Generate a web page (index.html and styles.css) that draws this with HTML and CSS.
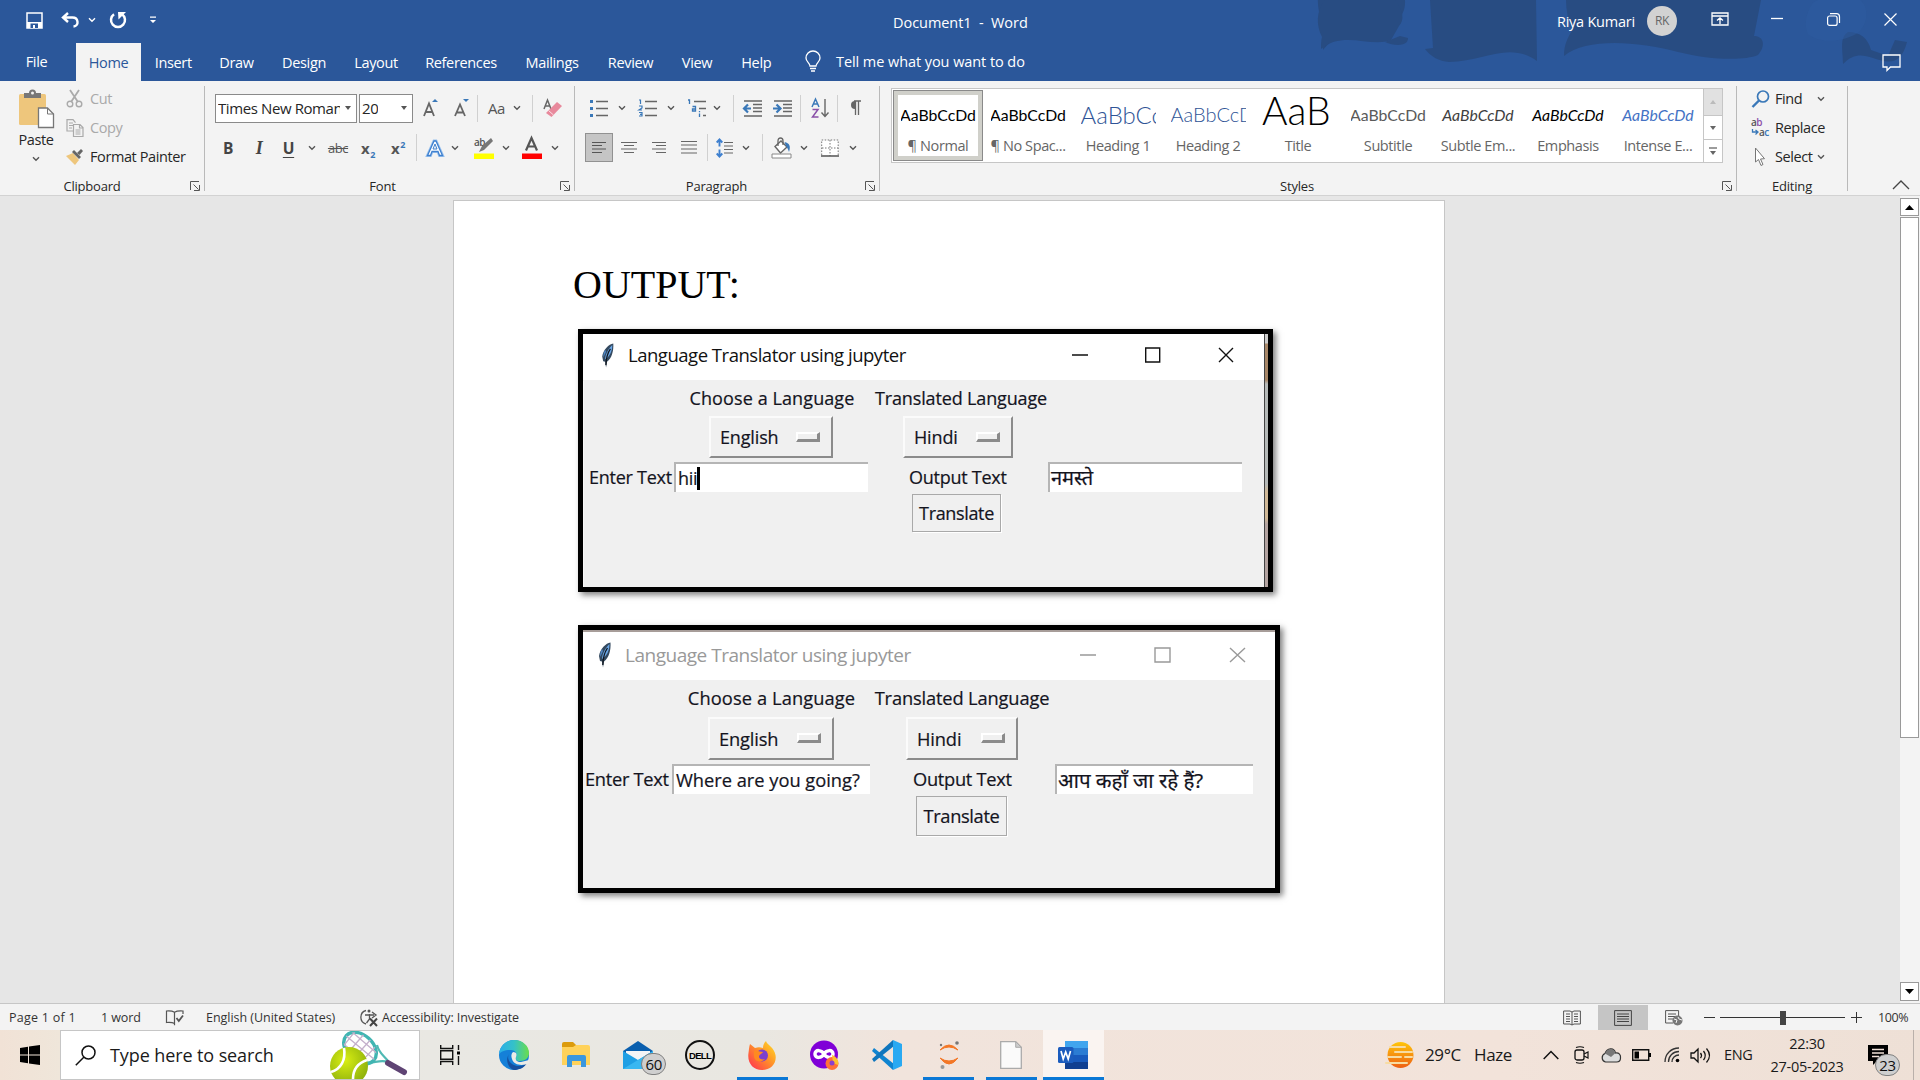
FILE: index.html
```html
<!DOCTYPE html>
<html lang="en">
<head>
<meta charset="utf-8">
<title>Document1 - Word</title>
<link rel="stylesheet" href="styles.css">
</head>
<body>
<svg class="defs" width="0" height="0" aria-hidden="true">
  <symbol id="chev" viewBox="0 0 8 6"><path d="M1 1.200l3 3 3-3" fill="none" stroke="currentColor" stroke-width="1.400"/></symbol>
  <symbol id="launch" viewBox="0 0 10 10"><path d="M.5 9V.5H9M3.500 3.500l5 5M9.500 4v5.500H4" fill="none" stroke="#555"/></symbol>
  <symbol id="feather" viewBox="0 0 14 26"><path d="M12.500.5C8 1 2 7 1 14l1 5 2 .5 1 6 1-6C11 16 13 8 12.500.5z" fill="#34495f"/><path d="M11.500 2C8 5 4 12 4 17c5-3 7.500-9 7.500-15z" fill="#6aa6e6"/><path d="M4 7C2.500 10 2 12 2.200 15L5 9z" fill="#4f86c4"/><path d="M9.500 6C6 11 5 15 4.800 23" fill="none" stroke="#10161d" stroke-width="1.300"/></symbol>
  <symbol id="para" viewBox="0 0 12 16"><path d="M5 1h7M6.500 1v14M9.500 1v14" stroke="#666" stroke-width="1.300" fill="none"/><path d="M6 1a4 4 0 0 0 0 8z" fill="#666"/></symbol>
</svg>

<header class="top">
  <svg class="art" width="620" height="81" viewBox="1300 0 620 81"><g fill="#284c82"><path d="M1325 0h70c12 16 14 34 2 45-14 11-50-2-74 29 0-10-2-18-1-28-6-16-6-32 3-46z" transform="translate(0 -24)"/><path d="M1325 0h70c8 10 10 20 4 26l-8 14c-20 8-48-10-70 9 0-5 0-8 1-12-6-12-6-26 3-37z"/><path d="M1385 42c9 4 23 5 23-4l-8-2z"/><path d="M1430 0h106l1 61c-28-20-52 0-88 1-10-1-18-5-24-13l8-1z"/><path d="M1566 0h195l-7 36c10 0 12 10 4 19-14 6-48 5-80-3-42-11-92-14-114 4 0-12 4-18 8-26-4-10-6-20-6-30z"/><path d="M1848 32c12 0 20 6 23 18l17 6 7-16 12 2c-6 22-16 22-34 16-12-4-20-4-30 6 0-14-4-26 5-32z"/></g><path d="M1808 12c4-10 8-12 12-12h40c10 8 8 26-4 34-14 8-36 10-48 0-3-6-3-14 0-22z" fill="#2d5c9f" opacity=".5"/></svg>
  <div class="titlebar">
    <div class="qat">
      <svg width="17" height="17" viewBox="0 0 17 17"><path d="M1 1h15v15H1z" fill="none" stroke="#fff" stroke-width="1.500"/><path d="M1 10h15v6H1z" fill="#fff"/><path d="M4.500 11.500h7.500V16H4.500z" fill="#2b579a"/><path d="M7 13h2v3H7z" fill="#fff"/></svg>
      <svg width="19" height="16" viewBox="0 0 19 16"><path d="M7 1L2 5.500 7 10M2 5.500h9.500c6 0 7 8.500 1 9" fill="none" stroke="#fff" stroke-width="2.400"/></svg>
      <svg class="c" width="8" height="6"><use href="#chev"/></svg>
      <svg width="18" height="18" viewBox="0 0 18 18"><path d="M5 3.200a7 7 0 1 0 8 0" fill="none" stroke="#fff" stroke-width="2.500"/><path d="M9 1h8L9.500 8.500z" fill="#fff"/></svg>
      <svg width="8" height="8" viewBox="0 0 8 8"><path d="M1 .5h6v1.300H1zM1 4h6L4 7z" fill="#fff"/></svg>
    </div>
    <div class="doctitle">Document1&nbsp; -&nbsp; Word</div>
    <div class="user">Riya Kumari</div>
    <div class="avatar">RK</div>
    <svg class="w1" width="18" height="14" viewBox="0 0 18 14"><path d="M1 1h16v12H1zM1 4h16M9 12V6M6 8.500L9 5.800l3 2.700" fill="none" stroke="#fff" stroke-width="1.300"/></svg>
    <svg class="w2" width="12" height="12" viewBox="0 0 12 12"><path d="M0 5.500h12" stroke="#fff" stroke-width="1.300"/></svg>
    <svg class="w3" width="13" height="13" viewBox="0 0 13 13"><rect x=".6" y="3" width="9.500" height="9.400" rx="2" fill="none" stroke="#fff" stroke-width="1.200"/><path d="M3 .7h6.500q3 0 3 3V10" fill="none" stroke="#fff" stroke-width="1.200"/></svg>
    <svg class="w4" width="13" height="13" viewBox="0 0 13 13"><path d="M.5.5l12 12M12.500.5l-12 12" stroke="#fff" stroke-width="1.200"/></svg>
  </div>
  <nav class="tabs">
    <span class="file">File</span><span class="on">Home</span><span>Insert</span><span>Draw</span><span>Design</span><span>Layout</span><span>References</span><span>Mailings</span><span>Review</span><span>View</span><span>Help</span>
    <svg class="bulb" width="16" height="21" viewBox="0 0 16 21"><path d="M5 15c0-3-4-4-4-8a7 7 0 0 1 14 0c0 4-4 5-4 8zM5 17.500h6M6 20h4" fill="none" stroke="#fff" stroke-width="1.300"/></svg>
    <span class="tell">Tell me what you want to do</span>
    <svg class="comment" width="19" height="18" viewBox="0 0 19 18"><path d="M1 1h17v12H8.500L5 16.500V13H1z" fill="none" stroke="#fff" stroke-width="1.300"/></svg>
  </nav>
</header>

<section class="ribbon">
  <div class="group clip">
    <div class="body">
      <div class="paste">
        <svg width="36" height="40" viewBox="0 0 36 40"><rect x="1" y="5" width="27" height="31" rx="1.500" fill="#eec67c"/><path d="M6 9V4h5a3.500 3.500 0 0 1 7 0h5v5z" fill="#777"/><circle cx="14.500" cy="4" r="1.500" fill="#f3f3f3"/><path d="M20.500 19h9l6 6v13.500h-15z" fill="#fff" stroke="#777" stroke-width="1.300"/><path d="M29.500 19v6h6" fill="none" stroke="#777"/></svg>
        <span>Paste</span>
        <svg class="c" width="8" height="6"><use href="#chev"/></svg>
      </div>
      <div class="cmds">
        <div class="cmd off"><svg width="18" height="18" viewBox="0 0 18 18"><path d="M4 0l8 12M13 0L5 12" stroke="#aaa" stroke-width="1.800"/><circle cx="4" cy="14" r="2.800" fill="none" stroke="#aaa" stroke-width="1.400"/><circle cx="13" cy="14" r="2.800" fill="none" stroke="#aaa" stroke-width="1.400"/></svg>Cut</div>
        <div class="cmd off"><svg width="18" height="18" viewBox="0 0 18 18"><path d="M7 12H1V.6h6l2.500 3M3 4h4M3 6.500h4M3 9h3" fill="none" stroke="#aaa" stroke-width="1.200"/><path d="M7.500 5.500H14l3 3v9H7.500zM13.500 5.500v3.500H17M9.500 11h5M9.500 13h5M9.500 15h5" fill="none" stroke="#aaa" stroke-width="1.200"/></svg>Copy</div>
        <div class="cmd"><svg width="18" height="16" viewBox="0 0 18 16"><path d="M0 7l7-3 6 7-4 5z" fill="#eec67c"/><path d="M6 3l2-2 7 7-2 2z" fill="#666"/><path d="M11 4l4-4 2 2-3.500 4z" fill="#666"/></svg>Format Painter</div>
      </div>
    </div>
    <div class="label"><span>Clipboard</span><svg width="10" height="10"><use href="#launch"/></svg></div>
  </div>

  <div class="group font">
    <div class="row r1">
      <div class="combo name"><span>Times New Roman</span><i></i></div>
      <div class="combo size"><span>20</span><i></i></div>
      <svg width="15" height="18" viewBox="0 0 15 18"><path d="M1 17L6 4.500 11 17M3 13h6" fill="none" stroke="#666" stroke-width="1.800"/><path d="M9 3l3-3 3 3z" fill="#3a78b8"/></svg>
      <svg width="15" height="18" viewBox="0 0 15 18"><path d="M1 17L6 5.500 11 17M3 13.500h6" fill="none" stroke="#666" stroke-width="1.800"/><path d="M9 0l3 3 3-3z" fill="#3a78b8"/></svg>
      <b class="sep"></b>
      <span class="aa">Aa</span>
      <svg class="c" width="8" height="6"><use href="#chev"/></svg>
      <b class="sep"></b>
      <svg width="19" height="20" viewBox="0 0 19 20"><path d="M1 11L4.500 2 8 11M2.500 8h4" fill="none" stroke="#666" stroke-width="1.500"/><path d="M3 15L14 4l5 4L8.500 19z" fill="#e8899c"/><path d="M5.500 12.500l5 4.500" stroke="#fbe0e5"/></svg>
    </div>
    <div class="row r2">
      <span class="fb">B</span><span class="fi">I</span><span class="fu">U</span>
      <svg class="c" width="8" height="6"><use href="#chev"/></svg>
      <span class="fs">abc</span>
      <span class="fx">x<sub>2</sub></span><span class="fx">x<sup>2</sup></span>
      <b class="sep"></b>
      <svg width="18" height="18" viewBox="0 0 18 18"><path d="M1.500 16.500L8 2h2l6.500 14.500h-3l-1.500-4H6l-1.500 4z" fill="#fff" stroke="#9cc3ee" stroke-width="3"/><path d="M1.500 16.500L8 2h2l6.500 14.500h-3l-1.500-4H6l-1.500 4z" fill="#fff" stroke="#3f80cf" stroke-width="1.300"/><path d="M7 10l2-5 2 5z" fill="#f3f3f3" stroke="#3f80cf"/></svg>
      <svg class="c" width="8" height="6"><use href="#chev"/></svg>
      <svg class="end" width="22" height="22" viewBox="0 0 22 22"><text x="1" y="9" class="tiny">ab</text><path d="M6 15l3-6L18 1l2 3-9 9z" fill="#777"/><path d="M1 16.500h20V22H1z" fill="#ff0"/></svg>
      <svg class="c" width="8" height="6"><use href="#chev"/></svg>
      <svg width="22" height="22" viewBox="0 0 22 22"><path d="M5 13.500L10.500 1 16 13.500M7 9.500h7" fill="none" stroke="#555" stroke-width="2.200"/><path d="M1 16.500h20V22H1z" fill="red"/></svg>
      <svg class="c" width="8" height="6"><use href="#chev"/></svg>
    </div>
    <div class="label"><span>Font</span><svg width="10" height="10"><use href="#launch"/></svg></div>
  </div>

  <div class="group parag">
    <div class="row r1">
      <svg width="20" height="18" viewBox="0 0 20 18"><path d="M7 2.500h12M7 9.500h12M7 16.500h12" stroke="#666" stroke-width="1.300"/><path d="M1 1h3v3H1zM1 8h3v3H1zM1 15h3v3H1z" fill="#3a78b8"/></svg>
      <svg class="c" width="8" height="6"><use href="#chev"/></svg>
      <svg width="20" height="18" viewBox="0 0 20 18"><path d="M7 2.500h12M7 9.500h12M7 16.500h12" stroke="#666" stroke-width="1.300"/><path d="M1 1h1.500v4M1 7h3v2L1 11h3M1 13.500h3V17H1M2 15.300h2" fill="none" stroke="#3a78b8" stroke-width="1.200"/></svg>
      <svg class="c" width="8" height="6"><use href="#chev"/></svg>
      <svg width="20" height="18" viewBox="0 0 20 18"><path d="M7 2.500h12M12 9.500h7M16 16.500h3" stroke="#666" stroke-width="1.300"/><path d="M1 1h1.500v4M5.500 7.500h3V12h-3v-2h3M12.500 12v1.300M12.500 14.500V18" fill="none" stroke="#3a78b8" stroke-width="1.300"/></svg>
      <svg class="c" width="8" height="6"><use href="#chev"/></svg>
      <b class="sep"></b>
      <svg width="19" height="17" viewBox="0 0 19 17"><path d="M1 1h18M10 4.500h9M10 8h9M10 11.500h9M1 16h18" stroke="#666" stroke-width="1.300"/><path d="M8 8.500H2M5 4.500l-4 4 4 4" fill="none" stroke="#3a78b8" stroke-width="2.200"/></svg>
      <svg class="end" width="19" height="17" viewBox="0 0 19 17"><path d="M1 1h18M10 4.500h9M10 8h9M10 11.500h9M1 16h18" stroke="#666" stroke-width="1.300"/><path d="M0 8.500h6M3.500 4.500l4 4-4 4" fill="none" stroke="#3a78b8" stroke-width="2.200"/></svg>
      <b class="sep"></b>
      <svg width="18" height="20" viewBox="0 0 18 20"><path d="M1 9l3.500-8L8 9M2 6h5" fill="none" stroke="#3a78b8" stroke-width="1.500"/><path d="M1.500 11.500H7L1.500 19H7.500" fill="none" stroke="#8a50a8" stroke-width="1.500"/><path d="M14 1v17M10.500 14.500l3.500 4 3.500-4" fill="none" stroke="#666" stroke-width="1.400"/></svg>
      <b class="sep"></b>
      <svg width="12" height="16"><use href="#para"/></svg>
    </div>
    <div class="row r2">
      <span class="pressed"><svg width="16" height="13" viewBox="0 0 16 13"><path d="M1 1.500h14M1 4.500h10M1 8h14M1 11.500h10" stroke="#555" stroke-width="1.200"/></svg></span>
      <svg width="16" height="13" viewBox="0 0 16 13"><path d="M0 1.500h16M3 4.500h10M0 8h16M3 11.500h10" stroke="#666" stroke-width="1.200"/></svg>
      <svg width="16" height="13" viewBox="0 0 16 13"><path d="M1 1.500h14M5 4.500h10M1 8h14M5 11.500h10" stroke="#666" stroke-width="1.200"/></svg>
      <svg width="16" height="15" viewBox="0 0 16 15"><path d="M0 1.500h16M0 5h16M0 9h16M0 13h16" stroke="#666" stroke-width="1.200"/></svg>
      <b class="sep"></b>
      <svg width="18" height="20" viewBox="0 0 18 20"><path d="M3.500 2v6.500M3.500 11.500V18M.7 4.500L3.500 1.500l2.800 3M.7 15.500l2.800 3 2.800-3" fill="none" stroke="#3f80cf" stroke-width="1.900"/><path d="M8 4.500h9M8 8h9M8 11.500h9M8 15h9" stroke="#666" stroke-width="1.200"/></svg>
      <svg class="c" width="8" height="6"><use href="#chev"/></svg>
      <b class="sep"></b>
      <svg width="21" height="22" viewBox="0 0 21 22"><path d="M4 9.500L10 4l6 6-6.500 6z" fill="#fff" stroke="#666" stroke-width="1.400"/><path d="M7 9V4q0-3 2.500-3T12 4v4" fill="none" stroke="#666" stroke-width="1.300"/><path d="M13.500 5c5 1 6.500 4 4.500 10-1-3-1.500-4-3-6z" fill="#3a78b8"/><path d="M1 17h19v4H1z" fill="#fff" stroke="#888"/></svg>
      <svg class="c" width="8" height="6"><use href="#chev"/></svg>
      <svg width="18" height="18" viewBox="0 0 18 18"><path d="M.7 16V1h16.500v15M9 1v16M1 9h16" fill="#fff" stroke="#777" stroke-dasharray="1.500 1.500"/><path d="M0 17h18" stroke="#555" stroke-width="1.500"/></svg>
      <svg class="c" width="8" height="6"><use href="#chev"/></svg>
    </div>
    <div class="label"><span>Paragraph</span><svg width="10" height="10"><use href="#launch"/></svg></div>
  </div>

  <div class="group styles">
    <div class="gallery">
      <div class="st sel"><p>AaBbCcDd</p><em>¶ Normal</em></div>
      <div class="st"><p>AaBbCcDd</p><em>¶ No Spac...</em></div>
      <div class="st"><p class="h1">AaBbCc</p><em>Heading 1</em></div>
      <div class="st"><p class="h2">AaBbCcD</p><em>Heading 2</em></div>
      <div class="st"><p class="tt">AaB</p><em>Title</em></div>
      <div class="st"><p class="sb">AaBbCcDd</p><em>Subtitle</em></div>
      <div class="st"><p class="se">AaBbCcDd</p><em>Subtle Em...</em></div>
      <div class="st"><p class="eb">AaBbCcDd</p><em>Emphasis</em></div>
      <div class="st"><p class="ie">AaBbCcDd</p><em>Intense E...</em></div>
      <div class="gscroll">
        <span class="dis"><svg width="8" height="4" viewBox="0 0 8 4"><path d="M1 4l3-4 3 4z" fill="#bbb"/></svg></span>
        <span><svg width="8" height="4" viewBox="0 0 8 4"><path d="M1 0l3 4 3-4z" fill="#666"/></svg></span>
        <span><svg width="10" height="9" viewBox="0 0 10 9"><path d="M1 1h8" stroke="#666" stroke-width="1.300"/><path d="M2 4l3 4 3-4z" fill="#666"/></svg></span>
      </div>
    </div>
    <div class="label"><span>Styles</span><svg width="10" height="10"><use href="#launch"/></svg></div>
  </div>

  <div class="group edit">
    <div class="cmds">
      <div class="cmd"><svg width="20" height="18" viewBox="0 0 20 18"><circle cx="12" cy="6.500" r="5.500" fill="none" stroke="#3a78b8" stroke-width="1.700"/><path d="M8 10.500L1.500 17" stroke="#3a78b8" stroke-width="2.400"/></svg>Find<svg class="c far" width="8" height="6"><use href="#chev"/></svg></div>
      <div class="cmd"><svg width="20" height="20" viewBox="0 0 20 20"><text x="0" y="8" class="tiny">a<tspan fill="#8a50a8">b</tspan></text><path d="M1.500 11v3h5M4.500 12l2.500 2-2.500 2.500" fill="none" stroke="#3a78b8" stroke-width="1.300"/><text x="8" y="18" class="tiny">a<tspan fill="#3a78b8">c</tspan></text></svg>Replace</div>
      <div class="cmd"><svg width="20" height="18" viewBox="0 0 20 18"><path d="M4.500 0v14l3-2.500 2.500 6 2-1-2.500-5.500 4-.3z" fill="#fff" stroke="#777"/></svg>Select<svg class="c" width="8" height="6"><use href="#chev"/></svg></div>
    </div>
    <div class="label"><span>Editing</span></div>
  </div>
  <svg class="collapse" width="18" height="10" viewBox="0 0 18 10"><path d="M1 9l8-8 8 8" fill="none" stroke="#444" stroke-width="1.300"/></svg>
</section>

<main class="canvas">
  <article class="page">
    <h1>OUTPUT:</h1>
    <div class="shot one">
      <div class="wtitle"><svg width="14" height="25"><use href="#feather"/></svg><span>Language Translator using jupyter</span>
        <svg width="162" height="16" viewBox="0 0 162 16"><path d="M0 8h16M73.700 1h14v14h-14zM147 1l14 14M161 1l-14 14" fill="none" stroke="#111" stroke-width="1.400"/></svg></div>
      <div class="client">
        <div class="grid g1"><span class="choose">Choose a Language</span><span>Translated Language</span></div>
        <div class="grid g2"><div class="opt">English<i></i></div><div class="opt">Hindi<i></i></div></div>
        <div class="grid g3"><span>Enter Text</span><div class="entry">hii<i class="caret"></i></div><span class="out">Output Text</span><div class="entry hindi">नमस्ते</div></div>
        <div class="tbtn">Translate</div>
      </div>
      <div class="edge"></div>
    </div>
    <div class="shot two">
      <div class="wtitle"><svg width="14" height="26"><use href="#feather"/></svg><span>Language Translator using jupyter</span>
        <svg width="166" height="16" viewBox="0 0 166 16"><path d="M0 8h16M75 1h15v14H75zM150 1l15 14M165 1l-15 14" fill="none" stroke="#999" stroke-width="1.400"/></svg></div>
      <div class="client">
        <div class="grid g1"><span class="choose">Choose a Language</span><span>Translated Language</span></div>
        <div class="grid g2"><div class="opt">English<i></i></div><div class="opt">Hindi<i></i></div></div>
        <div class="grid g3"><span>Enter Text</span><div class="entry">Where are you going?</div><span class="out">Output Text</span><div class="entry hindi">आप कहाँ जा रहे हैं?</div></div>
        <div class="tbtn">Translate</div>
      </div>
    </div>
  </article>
  <div class="vscroll">
    <span class="sb-btn"><svg width="9" height="5" viewBox="0 0 9 5"><path d="M0 5l4.500-5L9 5z"/></svg></span>
    <span class="thumb"></span>
    <span class="sb-btn down"><svg width="9" height="5" viewBox="0 0 9 5"><path d="M0 0l4.500 5L9 0z"/></svg></span>
  </div>
</main>

<div class="status">
  <span class="s-page">Page 1 of 1</span><span class="s-words">1 word</span>
  <svg class="s-book" width="18" height="16" viewBox="0 0 18 16"><path d="M8.500 13.500c-2-1.200-4.500-1.300-8-1V1c4-.3 6 0 8 1.200C10.500 1 13 .7 17 1v3M8.500 2.200v13" fill="none" stroke="#555" stroke-width="1.200"/><path d="M10.500 8l2.300 3L17 5.500" fill="none" stroke="#555" stroke-width="1.800"/></svg>
  <span class="s-lang">English (United States)</span>
  <svg class="s-acc" width="19" height="18" viewBox="0 0 19 18"><path d="M6 1.500a7 7 0 0 0 0 13.500" fill="none" stroke="#555" stroke-width="1.300"/><circle cx="9" cy="2" r="1.500" fill="#555"/><path d="M5 6h9M9.500 5v5L6.500 14M12 3l4 3-4 3" fill="none" stroke="#555" stroke-width="1.300"/><path d="M10 9.500l7 7.500M17 9.500L10 17" stroke="#444" stroke-width="2"/></svg>
  <span class="s-acct">Accessibility: Investigate</span>
  <div class="views">
    <svg class="v1" width="18" height="16" viewBox="0 0 18 16"><path d="M.6 1H7l2 1 2-1h6.400v13H11l-2 1-2-1H.6zM9 2v13M3 4h4M3 6.500h4M3 9h4M3 11.500h4M11 4h4M11 6.500h4M11 9h4M11 11.500h4" fill="none" stroke="#555"/></svg>
    <span class="von"><svg width="18" height="16" viewBox="0 0 18 16"><path d="M.6.6h16.800v14.800H.6zM3 4h12M3 6.500h12M3 9h12M3 11.500h12" fill="none" stroke="#444"/></svg></span>
    <svg class="v3" width="18" height="16" viewBox="0 0 18 16"><path d="M8 13H.6V.6h13V6M3 4h8M3 6.500h7M3 9h5" fill="none" stroke="#555"/><circle cx="12.500" cy="10.500" r="5" fill="#777"/><path d="M9 9l3 1-1 3M13 7l1 2 3 1" fill="none" stroke="#f3f3f3"/></svg>
    <span class="minus"></span>
    <span class="slider"><i></i></span>
    <span class="plus"></span>
    <span class="pct">100%</span>
  </div>
</div>

<footer class="taskbar">
  <svg class="start" width="20" height="20" viewBox="0 0 20 20"><path d="M0 3l8-1.200v7.700H0zM9 1.600L20 0v9.500H9zM0 10.500h8v7.700L0 17zM9 10.500h11V20L9 18.400z"/></svg>
  <div class="search">
    <svg width="21" height="21" viewBox="0 0 21 21"><circle cx="13.500" cy="7.500" r="6.500" fill="none" stroke="#111" stroke-width="1.500"/><path d="M9 12L.8 20.200" stroke="#111" stroke-width="1.500"/></svg>
    <span>Type here to search</span>
    <svg class="tennis" width="82" height="48" viewBox="0 0 82 48"><defs><clipPath id="head"><ellipse cx="31" cy="17" rx="13" ry="18.500" transform="rotate(-48 31 17)"/></clipPath><radialGradient id="ball" cx=".4" cy=".35" r=".7"><stop offset="0" stop-color="#d9ee12"/><stop offset="1" stop-color="#8aae0c"/></radialGradient></defs><path d="M38 32c8 0 14-4 21-1M48 14c2 8 6 10 11 16" fill="none" stroke="#4fb9b4" stroke-width="2.200"/><ellipse cx="31" cy="17" rx="13" ry="18.500" transform="rotate(-48 31 17)" fill="#fff" stroke="#40b5b2" stroke-width="3.400"/><path clip-path="url(#head)" d="M10 9l28 24M16 4l30 25M22 0l28 24M8 15l22 20M12 18L28-2M17 24L36 2M25 27L44 6M32 31L50 12" stroke="#c4b0cb" stroke-width="1.300"/><path d="M59 32l16 9" stroke="#5f4474" stroke-width="6" stroke-linecap="round"/><circle cx="20" cy="35" r="19" fill="url(#ball)"/><path d="M15 17C17 29 12 38 2 41M38 29c-9 3-14 9-14 19" fill="none" stroke="#fff" stroke-width="2.600"/></svg>
  </div>
  <svg class="tview" width="20" height="20" viewBox="0 0 20 20"><path d="M.7 0v3.500h12V0M.7 20v-3.500h12V20M.7 5.700h12v8.600H.7zM18.500 0v5M18.500 11v9" fill="none" stroke="#111" stroke-width="1.400"/><path d="M17 6.500h3v3h-3z"/></svg>
  <div class="apps">
    <div class="app"><svg width="30" height="30" viewBox="0 0 30 30"><defs><linearGradient id="e1" x1="0" x2="1"><stop offset="0" stop-color="#2aaee8"/><stop offset=".5" stop-color="#35c1c8"/><stop offset="1" stop-color="#6ade4a"/></linearGradient></defs><circle cx="15" cy="15" r="15" fill="#1580d8"/><path d="M0 14C1 5 8 0 15 0c9 0 15 6 15 13 0 5-4 8-9 8-4 0-5-2-4-4 2-5-2-7-6-7-6 0-9 2-11 4z" fill="url(#e1)"/><path d="M10 14c-3 5 2 12 10 12 4 0 6-2 8-3-3 5-8 7-13 7-6-2-9-10-5-16z" fill="#164f9e"/><path d="M14 12c4 0 4 3 3 5-1 3 1 5 5 5l8-2v3c-5 3-15 3-17-4-1-3-1-5 1-7z" fill="#ecebe6"/></svg></div>
    <div class="app"><svg width="28" height="26" viewBox="0 0 28 26"><path d="M0 2q0-2 2-2h9l3 3v5H0z" fill="#dc9b0c"/><path d="M2 5h9l3-2h12q2 0 2 2v18H0V5z" fill="#ffd25a"/><path d="M5 25V15q0-2 2-2h15q2 0 2 2v10h-5v-6h-9v6z" fill="#3b97dd"/></svg></div>
    <div class="app mail"><svg width="30" height="28" viewBox="0 0 30 28"><path d="M0 10L15 0l15 10v18H0z" fill="#0a5fae"/><path d="M3 10h24v10H3z" fill="#f4f4f6"/><path d="M0 10l15 9 15-9v18H0z" fill="#1f9fe4"/><path d="M0 28L30 10v18z" fill="#38b7f1"/></svg><em class="badge">60</em></div>
    <div class="app"><svg width="30" height="30" viewBox="0 0 30 30"><circle cx="15" cy="15" r="14" fill="none" stroke="#111" stroke-width="2"/><text x="15" y="19" text-anchor="middle" class="dell">DELL</text></svg></div>
    <div class="app run"><svg width="28" height="29" viewBox="0 0 28 29"><defs><linearGradient id="f1" x1="1" y1="0" x2="0" y2="1"><stop offset="0" stop-color="#ffe226"/><stop offset=".45" stop-color="#ff9328"/><stop offset="1" stop-color="#ff2a55"/></linearGradient></defs><path d="M2 3l5 4c3-1 5-1 8 0 0-3 1-5 3-7 1 4 8 6 9.500 14C29 22 23 29 14 29S-1 22 .5 12C1 9 1 6 2 3z" fill="url(#f1)"/><circle cx="14" cy="14.500" r="6" fill="#7b3fcf"/><path d="M6 10c4-1 6 1 9 1-1 2-4 2-4 5 0 2 4 3 6 2-3 4-11 3-11-3z" fill="#ff8a20"/></svg></div>
    <div class="app"><svg width="30" height="30" viewBox="0 0 30 30"><circle cx="15" cy="14.500" r="14" fill="#8000d7"/><path d="M15 14c-2-4-9-5-9 0s7 4 9 0c2-4 9-5 9 0s-7 4-9 0z" fill="none" stroke="#fff" stroke-width="3.500"/><circle cx="23" cy="23.500" r="6.500" fill="#ff7139"/><path d="M23 15c5 2 7 6 6 10l-5-2z" fill="#ffc12d"/><circle cx="23" cy="23" r="2.500" fill="#8a40d0"/></svg></div>
    <div class="app"><svg width="30" height="30" viewBox="0 0 30 30"><path d="M2 8l20 16-1 6L0 11z" fill="#1084d0"/><path d="M2 22L22 6l-1-6L0 19z" fill="#0f76bd"/><path d="M21 0l9 4v22l-9 4z" fill="#29a9f2"/></svg></div>
    <div class="app run"><svg width="22" height="30" viewBox="0 0 22 30"><path d="M2 10q9-10 18 0Q11 4 2 10zM2 18q9 12 18 0-9 6-18 0z" fill="#f37726" stroke="#f37726"/><circle cx="19" cy="3" r="1.800" fill="#777"/><circle cx="3" cy="5" r="1.200" fill="#777"/><circle cx="4.500" cy="27" r="2" fill="#999"/></svg></div>
    <div class="app run"><svg width="22" height="28" viewBox="0 0 22 28"><path d="M.7.7h15l5.600 5.600v21H.7z" fill="#fafafa" stroke="#aaa" stroke-width="1.300"/><path d="M15.700.7v5.600h5.600z" fill="#ccc" stroke="#aaa"/></svg></div>
    <div class="app run cur"><svg width="30" height="28" viewBox="0 0 30 28"><path d="M7 0h23v7H7z" fill="#41a5ee"/><path d="M7 7h23v7H7z" fill="#2b7cd3"/><path d="M7 14h23v7H7z" fill="#185abd"/><path d="M7 21h23v7H7z" fill="#103f91"/><rect y="6" width="15.500" height="16" rx="1.500" fill="#1b5cbe"/><path d="M3 10l2.200 8 2.500-7 2.500 7 2.300-8" fill="none" stroke="#fff" stroke-width="1.700"/></svg></div>
  </div>
  <div class="tray">
    <svg class="haze" width="30" height="28" viewBox="0 0 30 28"><defs><linearGradient id="hz" y2="1" x2="0"><stop offset="0" stop-color="#ffc60a"/><stop offset="1" stop-color="#ee5f14"/></linearGradient></defs><circle cx="15.500" cy="14" r="13" fill="url(#hz)"/><path d="M5 6h15M10 11h17M3 16h13M20 16h7M1 22h21" stroke="#f7dca3" stroke-width="2" stroke-linecap="round"/></svg>
    <span class="temp">29°C</span><span class="hz">Haze</span>
    <svg class="t1" width="16" height="10" viewBox="0 0 16 10"><path d="M.7 9L8 1.500 15.300 9" fill="none" stroke="#111" stroke-width="1.500"/></svg>
    <svg class="t2" width="15" height="18" viewBox="0 0 15 18"><rect x="1" y="4" width="9" height="10" rx="2" fill="none" stroke="#111" stroke-width="1.300"/><path d="M10 8l4-2v6l-4-2M2 1.500q4-1.500 8 0M2 16.500q4 1.500 8 0" fill="none" stroke="#111" stroke-width="1.200"/></svg>
    <svg class="t3" width="20" height="15" viewBox="0 0 20 15"><path d="M4.500 14A4.500 4.500 0 0 1 4 5.500C6 0 13-1 14.500 5 18 4.500 20 7 19.500 10c0 2.500-1.500 4-4 4z" fill="#ddd" stroke="#333" stroke-width="1.200"/><path d="M4 5.500C6 0 13-1 14.500 5L10 9z" fill="#777"/></svg>
    <svg class="t4" width="19" height="12" viewBox="0 0 19 12"><path d="M.7.7h16v10.600H.7z" fill="none" stroke="#111" stroke-width="1.400"/><path d="M2.500 2.500H7v7H2.500zM17 4h2v4h-2z"/></svg>
    <svg class="t5" width="16" height="16" viewBox="0 0 16 16"><path d="M1 15C1 7 7 1 15 1M4.500 15C4.500 9 9 4.500 15 4.500M8 15c0-4 3-7 7-7" fill="none" stroke="#333" stroke-width="1.300"/><circle cx="13.500" cy="13.500" r="1.800"/></svg>
    <svg class="t6" width="21" height="17" viewBox="0 0 21 17"><path d="M1 6h3l4-4v13l-4-4H1zM10.500 6q2 2.500 0 5M13.500 4q3.500 4.500 0 9M16.500 1.500q6 7 0 14" fill="none" stroke="#111" stroke-width="1.300"/></svg>
    <span class="eng">ENG</span>
    <div class="clock"><span>22:30</span><span>27-05-2023</span></div>
    <div class="notif"><svg width="20" height="20" viewBox="0 0 20 20"><path d="M0 0h20v16H9l-4 4v-4H0z"/><path d="M4 4.500h12M4 8h12M4 11.500h7" stroke="#f1e1d8" stroke-width="1.300"/></svg><em class="badge">23</em></div>
  </div>
</footer>
</body>
</html>
```
FILE: styles.css
```css
* { box-sizing: border-box; }
body { margin: 0; width: 1920px; height: 1080px; overflow: hidden; display: flex; flex-direction: column; font-family: "Open Sans", "Noto Sans", sans-serif; font-size: 14.5px; letter-spacing: -.4px; color: #262626; line-height: 20px; white-space: nowrap; }
svg { display: block; flex: none; overflow: visible; }
.defs { position: absolute; }
em, i { font-style: normal; }
.c { color: #555; }

/* title bar and tabs */
.top { height: 81px; background: #2b579a; color: #fff; position: relative; flex: none; }
.art { position: absolute; right: 0; top: 0; overflow: hidden; }
.titlebar { position: relative; height: 43px; display: flex; align-items: flex-start; }
.qat { width: 893px; padding: 11px 0 0 26px; display: grid; grid-template-columns: 35px 27px 21px 40px 10px; align-items: center; }
.qat .c { color: #fff; }
.doctitle { width: 664px; padding-top: 13px; letter-spacing: -.05px; }
.user { width: 90px; padding-top: 12px; letter-spacing: -.25px; }
.avatar { width: 30px; height: 30px; margin-top: 6px; border-radius: 50%; background: #d2d2d2; color: #666; font-size: 12px; line-height: 30px; text-align: center; }
.w1 { margin: 12px 0 0 34px; }
.w2 { margin: 13px 0 0 42px; }
.w3 { margin: 13px 0 0 44px; }
.w4 { margin: 13px 0 0 44px; }
.tabs { position: relative; height: 38px; display: grid; grid-template-columns: 76px 65px 64.5px 62px 73px 71px 99px 83px 74px 59px 59.500px 50px 1fr 38px; align-items: stretch; }
.tabs span { text-align: center; line-height: 39px; letter-spacing: -.35px; }
.tabs .file { padding-right: 3px; line-height: 37px; }
.tabs .on { background: #f3f3f3; color: #2b579a; }
.tabs .tell { text-align: left; line-height: 37px; letter-spacing: -.07px; }
.bulb { margin: 8px 0 0 19px; }
.comment { margin-top: 11px; }

/* ribbon */
.ribbon { height: 115px; flex: none; background: #f3f3f3; border-bottom: 1px solid #d2d2d2; padding-top: 5px; display: flex; }
.group { height: 105px; border-right: 1px solid #b9b9b9; display: flex; flex-direction: column; flex: none; }
.clip { width: 205px; }
.font { width: 370px; padding-left: 10px; }
.parag { width: 305px; padding-left: 5px; }
.styles { width: 857px; padding: 2px 0 0 11px; }
.edit { width: 111px; }
.label { margin-top: auto; height: 11px; display: flex; align-items: center; justify-content: center; font-size: 13px; letter-spacing: -.2px; position: relative; }
.label svg { position: absolute; right: 4px; bottom: 0; }
.clip .label { padding-right: 20px; }
.font .label { padding-right: 24px; }
.parag .label { padding-right: 26px; }
.styles .label { padding-right: 33px; }
.body { display: flex; }
.paste { width: 66px; padding: 3px 0 0 6px; display: flex; flex-direction: column; align-items: center; }
.paste span { margin: 1px 0 6px; }
.cmds { display: flex; flex-direction: column; }
.cmd { height: 29px; display: flex; align-items: center; gap: 6px; position: relative; top: -2px; }
.off { color: #a9a9a9; }
.edit .cmds { padding-left: 14px; }
.edit .cmd { gap: 4px; }
.edit .far { margin-left: 11px; }
.row { display: grid; align-items: center; justify-items: center; height: 40px; flex: none; }
.row .sep { width: 1px; height: 27px; background: #d0d0d0; }
.row .end { justify-self: end; }
.font .r1 { grid-template-columns: 144px 54px 35px 27px 5px 33px 7px 24px 17px; height: 44px; }
.font .r2, .parag .r2 { height: 35px; }
.font .r2 { grid-template-columns: 26px 36px 23px 24px 28px 32px 28px 9px 28px 12px 34px 22px 30px 16px; }
.combo { height: 29px; border: 1px solid #8a8a8a; background: #fff; display: flex; align-items: center; justify-content: space-between; padding: 0 5px 0 2px; justify-self: start; overflow: hidden; }
.combo span { overflow: hidden; font-size: 15px; }
.combo.name { width: 142px; }
.combo.name span { width: 122px; }
.combo.size { width: 54px; }
.combo i { border: 3.500px solid transparent; border-top: 4px solid #555; border-bottom: 0; }
.aa { color: #555; font-size: 15px; }
.fb, .fi, .fu { font-weight: 700; color: #444; font-size: 15.500px; }
.fi { font-family: "Liberation Serif", serif; font-style: italic; font-size: 18px; }
.fu { text-decoration: underline; text-underline-offset: 3px; }
.fs { text-decoration: line-through; color: #555; font-size: 13px; }
.fx { font-weight: 700; color: #555; font-size: 15px; line-height: 16px; }
.fx sub, .fx sup { font-size: 9px; line-height: 0; color: #3a78b8; margin-left: 1px; }
.tiny { font: 600 10px "Open Sans", sans-serif; letter-spacing: -.5px; fill: #555; }
.parag .r1 { height: 44px; grid-template-columns: 14px 32px 20px 26px 26px 14px 19px 18px 31px 17px 21px 15px 20px; padding-left: 12px; }
.parag .r2 { grid-template-columns: 28px 32px 28px 32px 5px 30px 12px 21px 16px 30px 21px 26px; padding-left: 5px; }
.pressed { width: 28px; height: 29px; background: #c5c5c5; border: 1px solid #919191; display: grid; place-items: center; }
.gallery { width: 832px; height: 75px; border: 1px solid #c6c6c6; background: #fff; display: flex; padding-left: 1px; }
.st { width: 90px; height: 71px; margin-top: 1px; text-align: center; flex: none; display: flex; flex-direction: column; align-items: center; overflow: hidden; border: 1px solid transparent; }
.sel { border-color: #8a8a8a; box-shadow: inset 0 0 0 4px #d0d0ca; }
.st p { margin: 0; height: 36px; width: 75px; overflow: hidden; font: 15.800px/48px Lato, sans-serif; color: #000; letter-spacing: 0; display: flex; justify-content: center; }
.st em { color: #666; line-height: 20px; margin-top: 9px; font-size: 14.500px; }
.st .h1 { font-size: 24px; font-weight: 300; color: #2f5496; line-height: 47px; justify-content: flex-start; }
.st .h2 { font-size: 20px; font-weight: 300; color: #2f5496; line-height: 47px; justify-content: flex-start; }
.st .tt { font-size: 39px; font-weight: 300; line-height: 38px; justify-content: flex-start; width: 72px; }
.st .sb { color: #5a5a5a; }
.st .se { color: #404040; font-style: italic; }
.st .eb { font-style: italic; }
.st .ie { color: #4472c4; font-style: italic; }
.gscroll { margin-left: auto; width: 19px; display: grid; grid-template-rows: 26px 24px 1fr; border-left: 1px solid #c6c6c6; }
.gscroll span { display: grid; place-items: center; }
.gscroll span + span { border-top: 1px solid #c6c6c6; }
.gscroll .dis { background: #e1e1e1; }
.collapse { margin: 94px 0 0 44px; }

/* document */
.canvas { height: 807px; flex: none; background: #e6e6e6; display: flex; justify-content: space-between; overflow: hidden; }
.page { width: 992px; height: 820px; margin: 4px 0 0 453px; background: #fff; border: 1px solid #c6c6c6; padding-left: 124px; }
h1 { margin: 61px 0 0 -5px; font: 40px/46px "Liberation Serif", "Times New Roman", serif; color: #000; letter-spacing: 0; }
.shot { border: 5px solid #000; background: #f0f0f0; font-size: 18px; letter-spacing: -.15px; color: #14141e; box-shadow: 3px 3px 6px rgba(0,0,0,.5); position: relative; line-height: 24px; }
.client { -webkit-text-stroke: .2px; }
.one { width: 695px; height: 263px; margin-top: 21px; }
.two { width: 702px; height: 268px; margin-top: 33px; }
.wtitle { height: 47px; background: #fff; display: flex; padding: 9px 0 0 18px; font-size: 18.500px; letter-spacing: -.48px; color: #111; border-bottom: 1px solid #f0f0f0; }
.wtitle span { width: 444px; margin-left: 13px; }
.wtitle svg + span + svg { margin-top: 4px; }
.one .client { height: 206px; border-left: 1px solid #f8f8f8; }
.one .edge { position: absolute; right: 0; top: 0; width: 4px; height: 253px; border-left: 1px solid #444; background: linear-gradient(#ccc 0 9px, #a88768 10px 46px, #b5b9b8 50px 150px, #d0b896 158px 184px, #b3a3a0 190px); }
.two .wtitle { height: 51px; color: #999; padding: 11px 0 0 15px; font-size: 19px; letter-spacing: -.48px; border-top: 2px solid #a79d99; }
.two .wtitle span { width: 455px; margin-left: 13px; }
.two .wtitle svg:first-child { margin-top: -1px; }
.grid { display: grid; align-items: center; }
.g1 span { text-align: center; }
.one .g1 { grid-template-columns: 182px 196px; padding-left: 97px; height: 33px; line-height: 22px; }
.one .choose { letter-spacing: .1px; }
.one .g2 { grid-template-columns: 194px 110px; padding-left: 125px; height: 46px; }
.opt { width: 124px; height: 42px; background: #f0f0f0; border: 2px solid; border-color: #fbfbfb #8b8b8b #8b8b8b #fbfbfb; display: flex; align-items: center; justify-content: space-between; padding: 0 11px 0 9px; }
.opt + .opt { width: 110px; }
.opt i { width: 24px; height: 10px; border: 2px solid; border-color: #fff #8b8b8b #8b8b8b #fff; border-bottom-width: 3px; border-right-width: 3px; margin-top: -1px; }
.one .g3 { grid-template-columns: 85px 235px 139px 194px; height: 34px; padding-left: 5px; letter-spacing: -.25px; }
.entry { width: 194px; height: 30px; background: #fff; border-top: 2px solid #b5b5b5; border-left: 2px solid #b5b5b5; padding-left: 2px; display: flex; align-items: center; }
.caret { width: 3px; height: 23px; background: #000; }
.hindi { font-family: "Noto Sans", "Noto Sans Devanagari", sans-serif; font-size: 20px; padding-left: 1px; letter-spacing: 0; }
.tbtn { border: 1px solid #a9a9a9; box-shadow: 1px 1px #fff; text-align: center; letter-spacing: -.35px; }
.one .tbtn { width: 89px; height: 38px; line-height: 37px; margin-left: 328px; }
.two .client { font-size: 18.300px; }
.two .g1 { grid-template-columns: 187px 194px; padding-left: 95px; height: 34px; line-height: 22px; }
.two .choose { letter-spacing: .1px; }
.two .g2 { grid-template-columns: 198px 112px; padding-left: 125px; height: 47px; }
.two .opt { width: 126px; height: 43px; }
.two .opt + .opt { width: 112px; }
.two .g3 { grid-template-columns: 87px 241px 142px 198px; padding-left: 2px; height: 34px; letter-spacing: -.3px; }
.two .entry { width: 198px; letter-spacing: -.02px; }
.two .hindi { font-size: 20.500px; }
.two .tbtn { width: 91px; height: 40px; line-height: 38px; margin-left: 333px; }
.vscroll { width: 20px; background: #f3f3f3; padding-top: 2px; display: flex; flex-direction: column; }
.sb-btn { width: 19px; height: 18px; background: #fff; border: 1px solid #9a9a9a; display: grid; place-items: center; }
.thumb { width: 19px; height: 521px; margin-top: 1px; background: #fff; border: 1px solid #9a9a9a; }
.down { margin-top: 244px; height: 19px; }

/* status bar */
.status { height: 27px; flex: none; background: #f3f3f3; border-top: 1px solid #c6c6c6; display: flex; align-items: center; font-size: 12.500px; letter-spacing: -.1px; color: #333; padding: 1px 0 0 9px; }
.s-page { width: 92px; letter-spacing: .25px; }
.s-words { width: 65px; }
.s-book { margin-right: 22px; }
.s-lang { width: 154px; letter-spacing: -.03px; }
.s-acc { margin-right: 3px; }
.views { margin-left: auto; width: 357px; height: 26px; display: flex; align-items: center; }
.von { width: 50px; height: 26px; background: #c5c5c5; display: grid; place-items: center; margin: 0 17px 0 17px; }
.minus, .plus { width: 11px; height: 11px; background: linear-gradient(#333, #333) center/11px 1px no-repeat; }
.minus { margin-left: 21px; }
.plus { background: linear-gradient(#333, #333) center/11px 1px no-repeat, linear-gradient(#333, #333) center/1px 11px no-repeat; margin-right: 16px; }
.slider { width: 125px; height: 14px; margin: 0 6px 0 5px; background: linear-gradient(#333, #333) center/100% 1px no-repeat; display: grid; place-items: center; }
.slider i { width: 6px; height: 14px; background: #444; }
.pct { letter-spacing: -.4px; }

/* taskbar */
.taskbar { height: 50px; flex: none; background: linear-gradient(90deg, #f1e2d6 0, #efe6da 60px, #e9e8e3 430px, #e9e7e1 760px, #f1e4dc 900px, #f2e3da 1500px, #eee0d6 1920px); display: flex; color: #1a1a1a; }
.start { margin: 15px 20px 0 20px; }
.search { width: 360px; height: 50px; background: #fff; border: 1px solid #c6c6c6; display: flex; font-size: 18px; letter-spacing: -.1px; line-height: 48px; overflow: hidden; }
.search > svg:first-child { margin: 14px 14px 0 14px; }
.search span { width: 219px; }
.tview { margin: 15px 0 0 20px; }
.apps { display: flex; margin-left: 28px; }
.app { width: 51px; margin-right: 11.200px; height: 50px; display: grid; place-items: center; border-bottom: 3px solid transparent; padding-top: 3px; position: relative; }
.run { border-color: #0a78d6; }
.cur { width: 61px; margin-left: -5px; background: #faf4f1; }
.badge { position: absolute; width: 25px; height: 22px; border-radius: 11px; background: #cfcfcf; border: 1px solid #808080; color: #111; font-size: 15px; line-height: 20px; letter-spacing: -.3px; text-align: center; }
.mail .badge { left: 29px; top: 23px; }
.dell { font: 700 9.500px "Liberation Sans", sans-serif; letter-spacing: -.7px; }
.tray { margin-left: auto; width: 535px; display: flex; }
.tray svg { align-self: center; }
.tray > span { line-height: 50px; font-size: 17px; }
.temp { width: 49px; margin-left: 10px; }
.hz { width: 69px; }
.t1 { margin-right: 15px; }
.t2 { margin-right: 12px; }
.t3 { margin-right: 11px; }
.t4 { margin-right: 13px; }
.t5 { margin-right: 10px; }
.t6 { margin-right: 13px; }
.tray > .eng { font-size: 14.500px; width: 45px; }
.clock { width: 76px; display: flex; flex-direction: column; align-items: center; line-height: 23px; padding-top: 2px; letter-spacing: -.25px; }
.notif { position: relative; margin-left: 23px; width: 46px; }
.notif { padding-top: 15px; border-right: 1px solid #b9b0aa; }
.notif .badge { left: 7px; top: 24px; }
```
